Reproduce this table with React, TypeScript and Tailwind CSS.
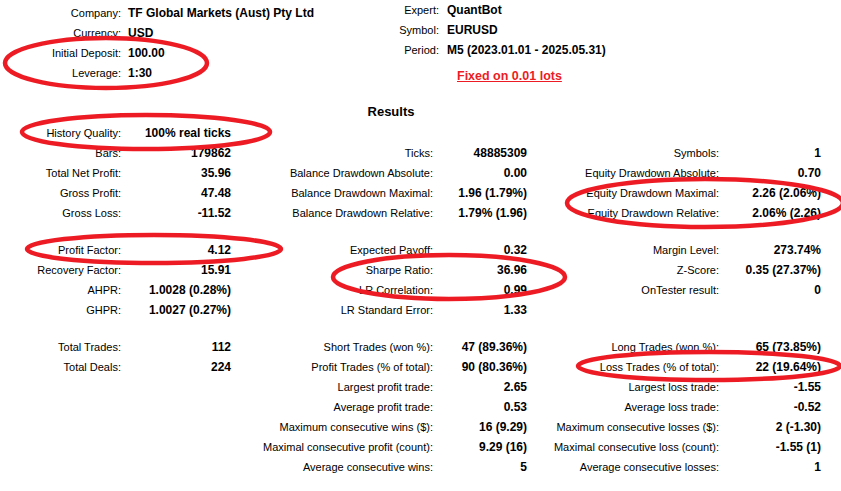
const header = [
  ["Company:", "TF Global Markets (Aust) Pty Ltd"],
  ["Currency:", "USD"],
  ["Initial Deposit:", "100.00"],
  ["Leverage:", "1:30"],
];

const headerRight = [
  ["Expert:", "QuantBot"],
  ["Symbol:", "EURUSD"],
  ["Period:", "M5 (2023.01.01 - 2025.05.31)"],
];

type Row = string[] | null;

const rows: Row[] = [
  ["History Quality:", "100% real ticks", "", "", "", ""],
  ["Bars:", "179862", "Ticks:", "48885309", "Symbols:", "1"],
  ["Total Net Profit:", "35.96", "Balance Drawdown Absolute:", "0.00", "Equity Drawdown Absolute:", "0.70"],
  ["Gross Profit:", "47.48", "Balance Drawdown Maximal:", "1.96 (1.79%)", "Equity Drawdown Maximal:", "2.26 (2.06%)"],
  ["Gross Loss:", "-11.52", "Balance Drawdown Relative:", "1.79% (1.96)", "Equity Drawdown Relative:", "2.06% (2.26)"],
  null,
  ["Profit Factor:", "4.12", "Expected Payoff:", "0.32", "Margin Level:", "273.74%"],
  ["Recovery Factor:", "15.91", "Sharpe Ratio:", "36.96", "Z-Score:", "0.35 (27.37%)"],
  ["AHPR:", "1.0028 (0.28%)", "LR Correlation:", "0.99", "OnTester result:", "0"],
  ["GHPR:", "1.0027 (0.27%)", "LR Standard Error:", "1.33", "", ""],
  null,
  ["Total Trades:", "112", "Short Trades (won %):", "47 (89.36%)", "Long Trades (won %):", "65 (73.85%)"],
  ["Total Deals:", "224", "Profit Trades (% of total):", "90 (80.36%)", "Loss Trades (% of total):", "22 (19.64%)"],
  ["", "", "Largest profit trade:", "2.65", "Largest loss trade:", "-1.55"],
  ["", "", "Average profit trade:", "0.53", "Average loss trade:", "-0.52"],
  ["", "", "Maximum consecutive wins ($):", "16 (9.29)", "Maximum consecutive losses ($):", "2 (-1.30)"],
  ["", "", "Maximal consecutive profit (count):", "9.29 (16)", "Maximal consecutive loss (count):", "-1.55 (1)"],
  ["", "", "Average consecutive wins:", "5", "Average consecutive losses:", "1"],
];

// hand-drawn red marks over the report
const marks = [
  { cx: 106, cy: 63, rx: 101, ry: 25 },
  { cx: 146, cy: 132, rx: 124, ry: 17 },
  { cx: 705, cy: 203, rx: 138, ry: 24 },
  { cx: 154, cy: 249, rx: 127, ry: 14 },
  { cx: 449, cy: 277, rx: 116, ry: 22 },
  { cx: 709, cy: 366, rx: 131, ry: 14 },
];

export default function App() {
  return (
    <div className="relative h-[491px] w-[841px] overflow-hidden bg-white font-['Liberation_Sans',Arial,sans-serif] text-[11px] text-black">
      <div className="flex h-[100px]">
        <div className="w-[280px] shrink-0 pt-[3px]">
          {header.map(([label, value]) => (
            <div key={label} className="flex h-5 items-center whitespace-nowrap">
              <span className="w-[121px] shrink-0 text-right">{label}</span>
              <span className="pl-[7px] text-[12px] font-bold">{value}</span>
            </div>
          ))}
        </div>
        <div className="flex-1">
          {headerRight.map(([label, value]) => (
            <div key={label} className="flex h-5 items-center whitespace-nowrap">
              <span className="w-[159px] shrink-0 text-right">{label}</span>
              <span className="pl-2 text-[12px] font-bold">{value}</span>
            </div>
          ))}
          <div className="mt-[8px] flex h-4 items-center pl-[177px]">
            <span className="text-[12.5px] font-bold text-[#ed1c24] underline">Fixed on 0.01 lots</span>
          </div>
        </div>
      </div>

      <div className="h-[23px] w-[782px] text-center text-[13px] leading-[23px] font-bold">Results</div>

      <div className="grid grid-cols-[121px_110px_202px_94px_192px_102px]">
        {rows.map((row, i) =>
          row === null ? (
            <div key={i} className="col-span-6 h-[17px]" />
          ) : (
            row.map((cell, j) => (
              <div
                key={`${i}-${j}`}
                className={
                  j % 2 === 0
                    ? "flex h-5 items-center justify-end whitespace-nowrap"
                    : "flex h-5 items-center justify-end whitespace-nowrap text-[12px] font-bold"
                }
              >
                {cell}
              </div>
            ))
          )
        )}
      </div>

      <svg className="pointer-events-none absolute inset-0" width="841" height="491">
        {marks.map((m, i) => (
          <ellipse key={i} cx={m.cx} cy={m.cy} rx={m.rx} ry={m.ry} fill="none" stroke="#ed1c24" strokeWidth="4.5" />
        ))}
      </svg>
    </div>
  );
}
